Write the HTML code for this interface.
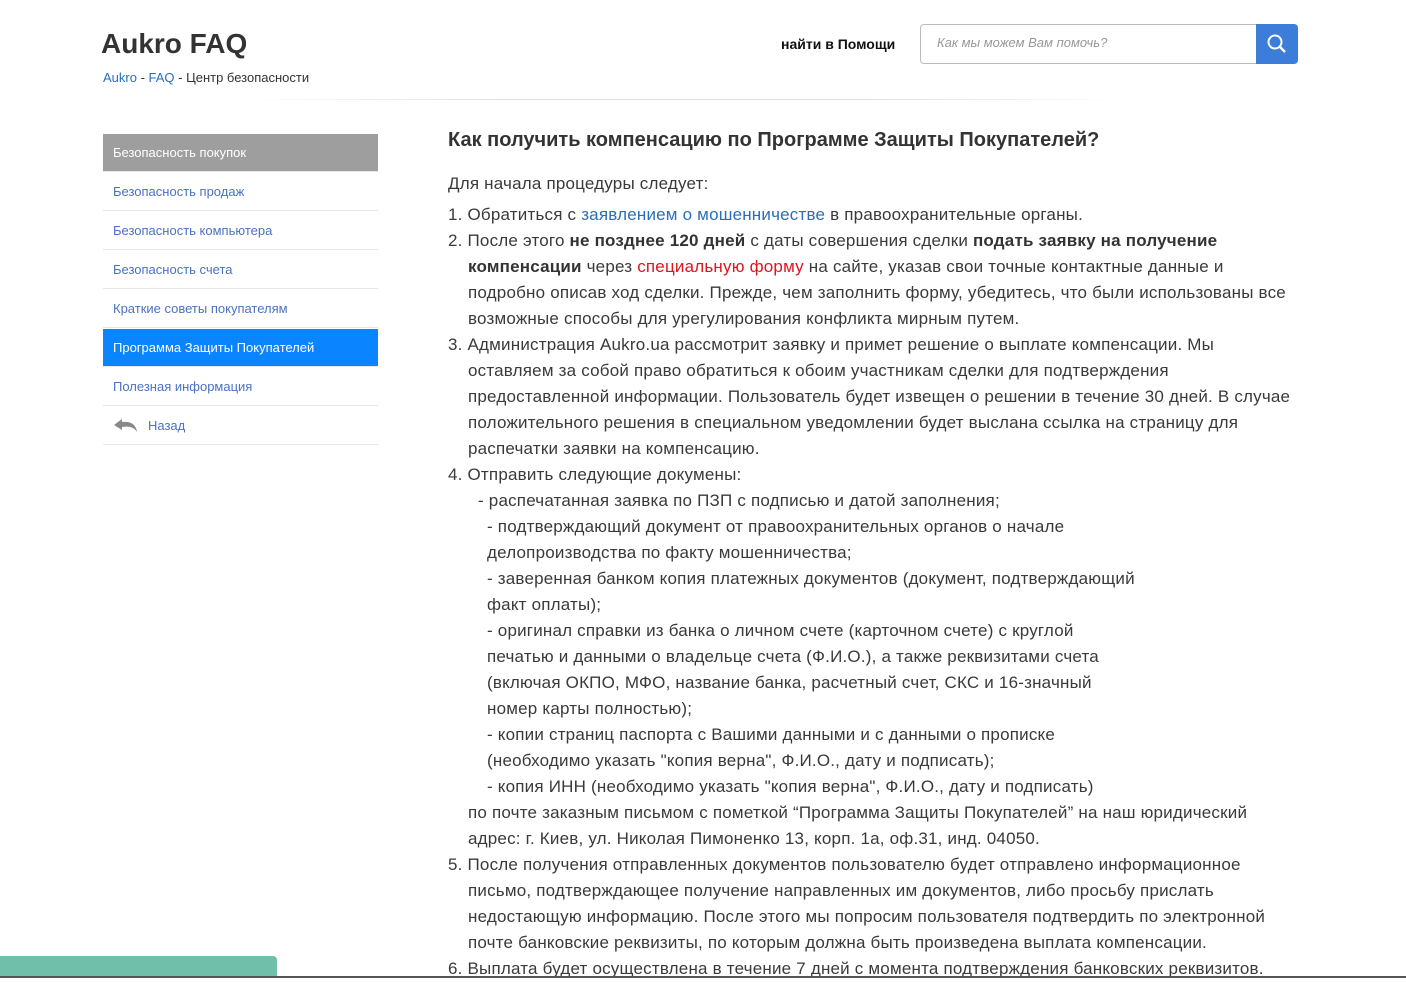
<!DOCTYPE html>
<html><head><meta charset="utf-8"><style>
body{margin:0;width:1406px;height:978px;overflow:hidden;background:#fff;font-family:"Liberation Sans",Arial,sans-serif;color:#333;position:relative}
.a{position:absolute;white-space:nowrap}
.t{font-size:17px;line-height:26px;color:#3a3a3a;letter-spacing:0.2px;margin-top:1px}
a{color:#2a6ebb;text-decoration:none}
.nav{position:absolute;left:103px;width:275px;height:38px;border-bottom:1px solid #e6e6e6;font-size:13px;line-height:38px;color:#4a72c4;padding-left:10px;box-sizing:border-box}
b{color:#333}
</style></head><body>
<div class="a" style="left:101px;top:28px;font-size:28px;font-weight:bold;color:#333">Aukro FAQ</div>
<div class="a" style="left:103px;top:70px;font-size:13px"><a>Aukro</a> - <a>FAQ</a> - Центр безопасности</div>
<div class="a" style="left:781px;top:36px;font-size:14px;font-weight:bold;color:#111">найти в Помощи</div>
<div class="a" style="left:920px;top:24px;width:336px;height:38px;border:1px solid #bbb;border-radius:4px 0 0 4px;"></div>
<div class="a" style="left:937px;top:35px;font-size:13px;font-style:italic;color:#999">Как мы можем Вам помочь?</div>
<div class="a" style="left:1256px;top:24px;width:42px;height:40px;background:#3b7dd8;border-radius:0 4px 4px 0">
<svg width="42" height="40"><circle cx="19" cy="18" r="6.5" fill="none" stroke="#fff" stroke-width="2"/><line x1="24" y1="23" x2="29" y2="28" stroke="#fff" stroke-width="2.4"/></svg></div>
<div class="a" style="left:250px;top:99px;width:870px;height:1px;background:linear-gradient(90deg,#fff,#ddd 30%,#ddd 70%,#fff)"></div>

<div class="nav" style="top:134px;background:#9e9e9e;color:#fff">Безопасность покупок</div>
<div class="nav" style="top:173px">Безопасность продаж</div>
<div class="nav" style="top:212px">Безопасность компьютера</div>
<div class="nav" style="top:251px">Безопасность счета</div>
<div class="nav" style="top:290px">Краткие советы покупателям</div>
<div class="nav" style="top:329px;background:#0a84ff;color:#fff">Программа Защиты Покупателей</div>
<div class="nav" style="top:368px">Полезная информация</div>
<div class="nav" style="top:407px;padding-left:45px">Назад</div>
<svg class="a" style="left:112px;top:417px" width="28" height="20"><path d="M2 8 L10 2 L10 5 C18 4 24 7 25 15 C22 10 17 9 10 10 L10 13 Z" fill="#888"/></svg>

<div class="a" style="left:448px;top:129px;font-size:20px;font-weight:bold;color:#333">Как получить компенсацию по Программе Защиты Покупателей?</div>
<div class="a t" style="left:448px;top:170px">Для начала процедуры следует:</div>
<div class="a t" style="left:448px;top:201px">1. Обратиться с <a>заявлением о мошенничестве</a> в правоохранительные органы.</div>
<div class="a t" style="left:448px;top:227px">2. После этого <b>не позднее 120 дней</b> с даты совершения сделки <b>подать заявку на получение</b></div>
<div class="a t" style="left:468px;top:253px"><b>компенсации</b> через <span style="color:#e0141e">специальную форму</span> на сайте, указав свои точные контактные данные и</div>
<div class="a t" style="left:468px;top:279px">подробно описав ход сделки. Прежде, чем заполнить форму, убедитесь, что были использованы все</div>
<div class="a t" style="left:468px;top:305px">возможные способы для урегулирования конфликта мирным путем.</div>
<div class="a t" style="left:448px;top:331px">3. Администрация Aukro.ua рассмотрит заявку и примет решение о выплате компенсации. Мы</div>
<div class="a t" style="left:468px;top:357px">оставляем за собой право обратиться к обоим участникам сделки для подтверждения</div>
<div class="a t" style="left:468px;top:383px">предоставленной информации. Пользователь будет извещен о решении в течение 30 дней. В случае</div>
<div class="a t" style="left:468px;top:409px">положительного решения в специальном уведомлении будет выслана ссылка на страницу для</div>
<div class="a t" style="left:468px;top:435px">распечатки заявки на компенсацию.</div>
<div class="a t" style="left:448px;top:461px">4. Отправить следующие докумены:</div>
<div class="a t" style="left:478px;top:487px">- распечатанная заявка по ПЗП с подписью и датой заполнения;</div>
<div class="a t" style="left:487px;top:513px">- подтверждающий документ от правоохранительных органов о начале</div>
<div class="a t" style="left:487px;top:539px">делопроизводства по факту мошенничества;</div>
<div class="a t" style="left:487px;top:565px">- заверенная банком копия платежных документов (документ, подтверждающий</div>
<div class="a t" style="left:487px;top:591px">факт оплаты);</div>
<div class="a t" style="left:487px;top:617px">- оригинал справки из банка о личном счете (карточном счете) с круглой</div>
<div class="a t" style="left:487px;top:643px">печатью и данными о владельце счета (Ф.И.О.), а также реквизитами счета</div>
<div class="a t" style="left:487px;top:669px">(включая ОКПО, МФО, название банка, расчетный счет, СКС и 16-значный</div>
<div class="a t" style="left:487px;top:695px">номер карты полностью);</div>
<div class="a t" style="left:487px;top:721px">- копии страниц паспорта с Вашими данными и с данными о прописке</div>
<div class="a t" style="left:487px;top:747px">(необходимо указать "копия верна", Ф.И.О., дату и подписать);</div>
<div class="a t" style="left:487px;top:773px">- копия ИНН (необходимо указать "копия верна", Ф.И.О., дату и подписать)</div>
<div class="a t" style="left:468px;top:799px">по почте заказным письмом с пометкой “Программа Защиты Покупателей” на наш юридический</div>
<div class="a t" style="left:468px;top:825px">адрес: г. Киев, ул. Николая Пимоненко 13, корп. 1а, оф.31, инд. 04050.</div>
<div class="a t" style="left:448px;top:851px">5. После получения отправленных документов пользователю будет отправлено информационное</div>
<div class="a t" style="left:468px;top:877px">письмо, подтверждающее получение направленных им документов, либо просьбу прислать</div>
<div class="a t" style="left:468px;top:903px">недостающую информацию. После этого мы попросим пользователя подтвердить по электронной</div>
<div class="a t" style="left:468px;top:929px">почте банковские реквизиты, по которым должна быть произведена выплата компенсации.</div>
<div class="a t" style="left:448px;top:955px">6. Выплата будет осуществлена в течение 7 дней с момента подтверждения банковских реквизитов.</div>
<div class="a" style="left:0;top:956px;width:277px;height:22px;background:#6fbfab;border-radius:0 4px 0 0"></div>
<div class="a" style="left:0;top:976px;width:1406px;height:2px;background:#555"></div>
</body></html>
